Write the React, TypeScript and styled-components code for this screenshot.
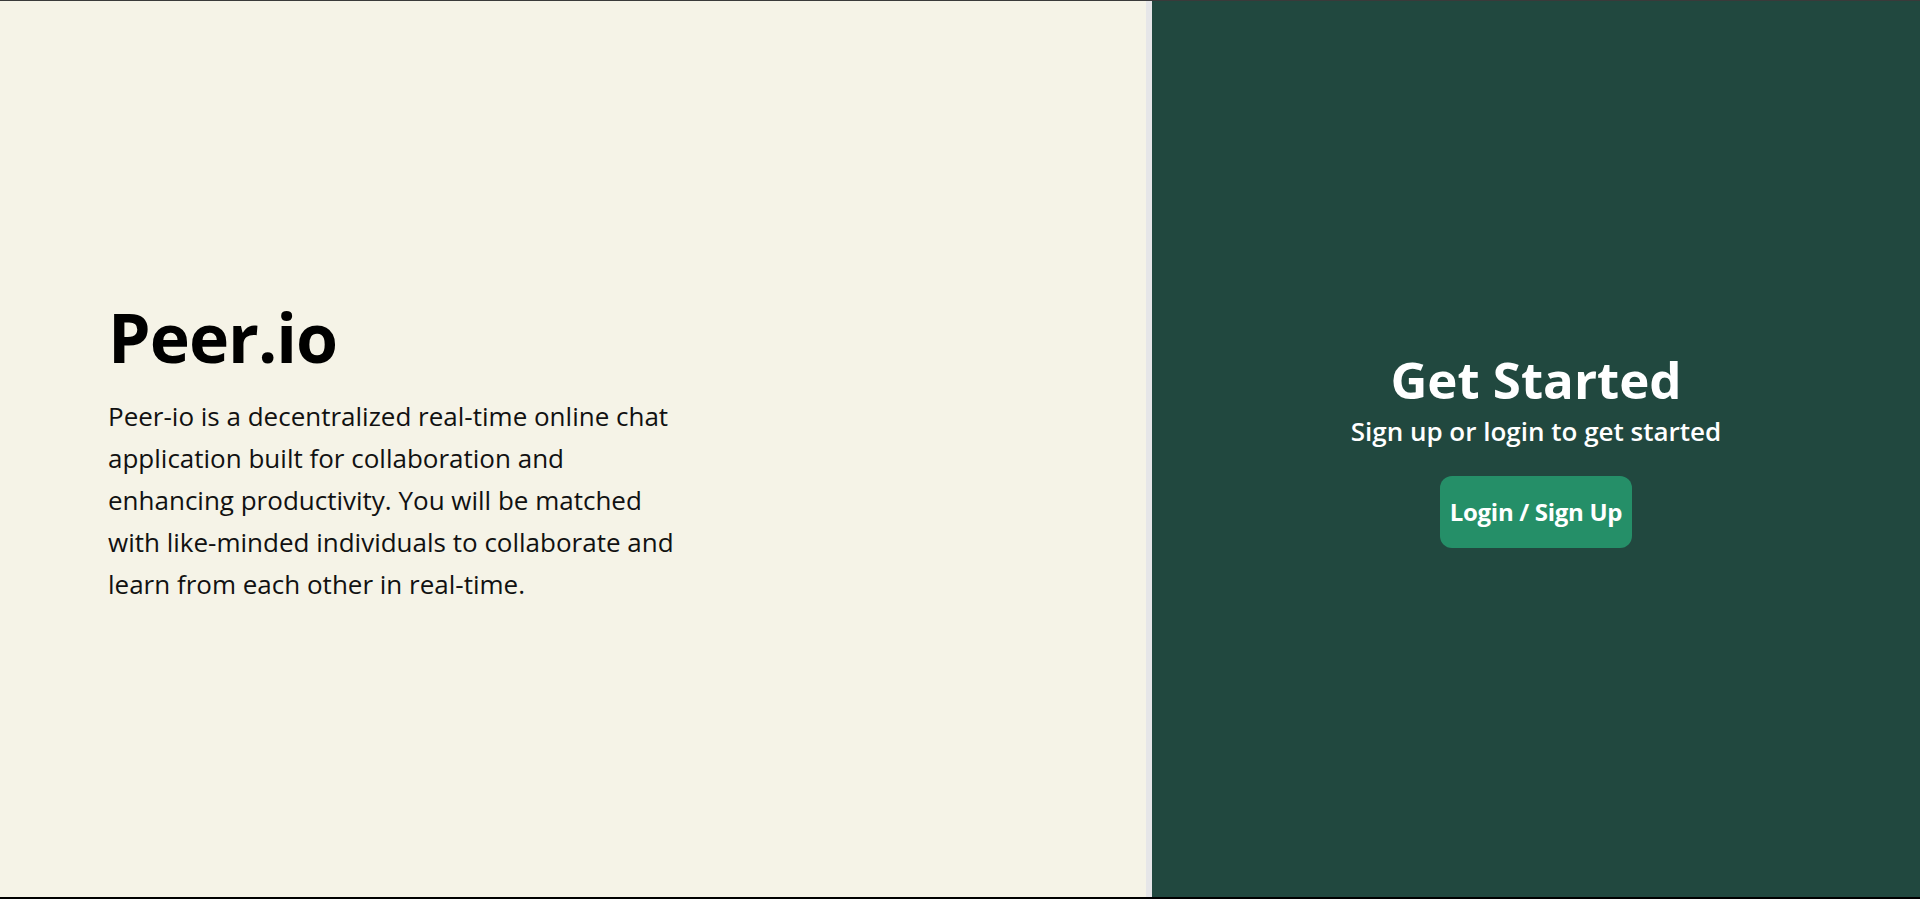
import styled, { createGlobalStyle } from 'styled-components';

const GlobalStyle = createGlobalStyle`
    * {
        box-sizing: border-box;
    }
    body {
        margin: 0;
        font-family: 'Open Sans', 'Noto Sans', sans-serif;
    }
`;

const Page = styled.main`
    height: 100vh;
    display: grid;
    grid-template-columns: 60% 40%;
    border-top: 1px solid #3a3a3a;
    border-bottom: 2px solid #000;
`;

const Intro = styled.section`
    background-color: #f5f3e7;
    border-right: 6px solid #e6e6e8;
    display: flex;
    flex-direction: column;
    justify-content: center;
    padding: 0 108px;
`;

const Brand = styled.h1`
    margin: 0 0 13px;
    font-size: 68px;
    font-weight: 700;
    line-height: 1.3;
    letter-spacing: -1px;
    color: #000;
`;

const About = styled.p`
    margin: 0;
    max-width: 580px;
    font-size: 26px;
    line-height: 42px;
    color: #111;
`;

const Start = styled.section`
    background-color: #21483f;
    color: #fff;
    display: flex;
    flex-direction: column;
    align-items: center;
    justify-content: center;
`;

const Heading = styled.h2`
    margin: 0 0 6px;
    font-size: 51px;
    font-weight: 700;
    line-height: 1.15;
`;

const Sub = styled.p`
    margin: 0;
    font-size: 26px;
    font-weight: 600;
    line-height: 1.3;
`;

const LoginButton = styled.button`
    margin-top: 27px;
    width: 192px;
    height: 72px;
    padding: 0;
    border: none;
    border-radius: 12px;
    background-color: #258f68;
    color: #fff;
    font-family: inherit;
    font-size: 24px;
    font-weight: 700;
    letter-spacing: -0.3px;
    cursor: pointer;
`;

function App() {
    return (
        <>
            <GlobalStyle />
            <Page>
                <Intro>
                    <Brand>Peer.io</Brand>
                    <About>
                        Peer-io is a decentralized real-time online chat application
                        built for collaboration and enhancing productivity. You will be
                        matched with like-minded individuals to collaborate and learn
                        from each other in real-time.
                    </About>
                </Intro>
                <Start>
                    <Heading>Get Started</Heading>
                    <Sub>Sign up or login to get started</Sub>
                    <LoginButton>Login / Sign Up</LoginButton>
                </Start>
            </Page>
        </>
    );
}

export default App;
